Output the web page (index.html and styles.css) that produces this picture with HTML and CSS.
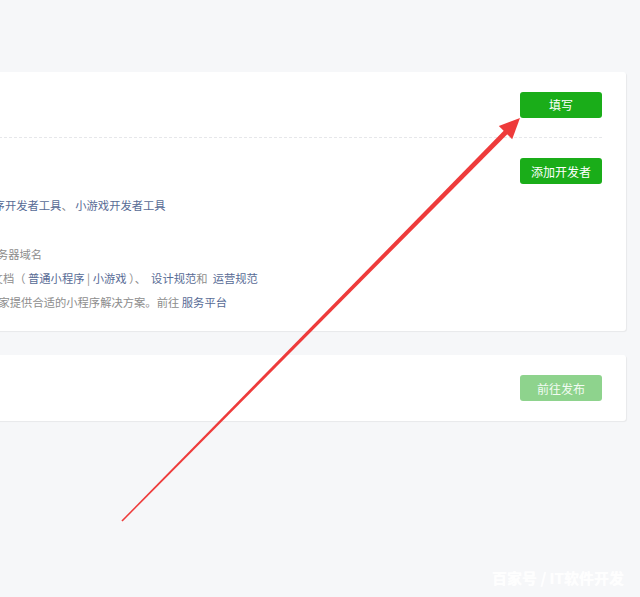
FILE: index.html
```html
<!DOCTYPE html>
<html lang="zh-CN">
<head>
<meta charset="utf-8">
<link rel="stylesheet" href="styles.css">
</head>
<body>
<div class="page">
  <div class="main">
    <div class="card">
      <div class="row row-top">
        <div class="col-text"></div>
        <a class="btn">填写</a>
      </div>
      <div class="row row-dev">
        <div class="col-text lines">
          <p class="ln ln1"><span class="link">小程序开发者工具</span><span class="gray">、</span> <span class="link">小游戏开发者工具</span></p>
          <p class="ln"></p>
          <p class="ln ln2 gray">配置服务器域名</p>
          <p class="ln ln3"><span class="gray">参考文档（ </span><span class="link">普通小程序</span><span class="gray"> | </span><span class="link">小游戏</span><span class="gray"> ）、&nbsp; </span><span class="link">设计规范</span><span class="gray">和&nbsp; </span><span class="link">运营规范</span></p>
          <p class="ln ln4"><span class="gray">服务商为商家提供合适的小程序解决方案。前往 </span><span class="link">服务平台</span></p>
        </div>
        <a class="btn">添加开发者</a>
      </div>
    </div>
    <div class="card">
      <div class="row row-pub">
        <div class="col-text"></div>
        <a class="btn btn-disabled">前往发布</a>
      </div>
    </div>
  </div>
</div>
<svg class="arrow" width="640" height="597" viewBox="0 0 640 597">
  <polygon fill="#ee3b3b" points="122.6,521.4 121.4,520.6 505.2,129.2 508.8,132.8"/>
  <polygon fill="#ee3b3b" points="520,118 512.2,139.2 498.8,126.0"/>
</svg>
<div class="watermark">百家号 / IT软件开发</div>
</body>
</html>
```
FILE: styles.css
```css
html, body {
  margin: 0;
  padding: 0;
}
body {
  background: #f6f7f9;
  font-family: "Noto Sans CJK SC", "Noto Sans", sans-serif;
  font-size: 11.3px;
  width: 640px;
  height: 597px;
  overflow: hidden;
  position: relative;
}
.page {
  padding-top: 72px;
}
.main {
  margin-left: -40px;
  width: 666px;
}
.card {
  background: #fff;
  border-radius: 3px;
  box-shadow: 1px 1px 1px rgba(0,0,0,0.06);
  margin-bottom: 24px;
}
.row {
  display: flex;
  align-items: flex-start;
  margin: 0 24px;
}
.col-text {
  flex: 1;
}
.row-top {
  height: 65px;
  align-items: center;
  border-bottom: 1px dashed #e6e7ea;
}
.row-dev {
  padding-top: 20px;
  height: 173px;
}
.row-pub {
  height: 66px;
  align-items: center;
}
.btn {
  display: flex;
  align-items: center;
  justify-content: center;
  width: 82px;
  height: 26px;
  border-radius: 3px;
  background: #1aad19;
  color: #fff;
  font-size: 12px;
  box-sizing: border-box;
}
.btn-disabled {
  background: #8ed38d;
  color: #f2fbf2;
}
.lines {
  padding-top: 35px;
}
.ln {
  margin: 0;
  height: 24.3px;
  line-height: 24.3px;
  white-space: nowrap;
}
.ln1 { margin-left: -13px; }
.ln2 { margin-left: -21px; }
.ln3 { margin-left: -15px; }
.ln4 { margin-left: -42px; }
.gray { color: #8d8d8d; }
.link { color: #576b95; }
.arrow {
  position: absolute;
  left: 0;
  top: 0;
  pointer-events: none;
}
.watermark {
  position: absolute;
  left: 492px;
  top: 567px;
  color: rgba(255,255,255,0.95);
  font-size: 15px;
  font-weight: bold;
  text-shadow: 0 0 1px rgba(255,255,255,0.8);
  white-space: nowrap;
}
```
